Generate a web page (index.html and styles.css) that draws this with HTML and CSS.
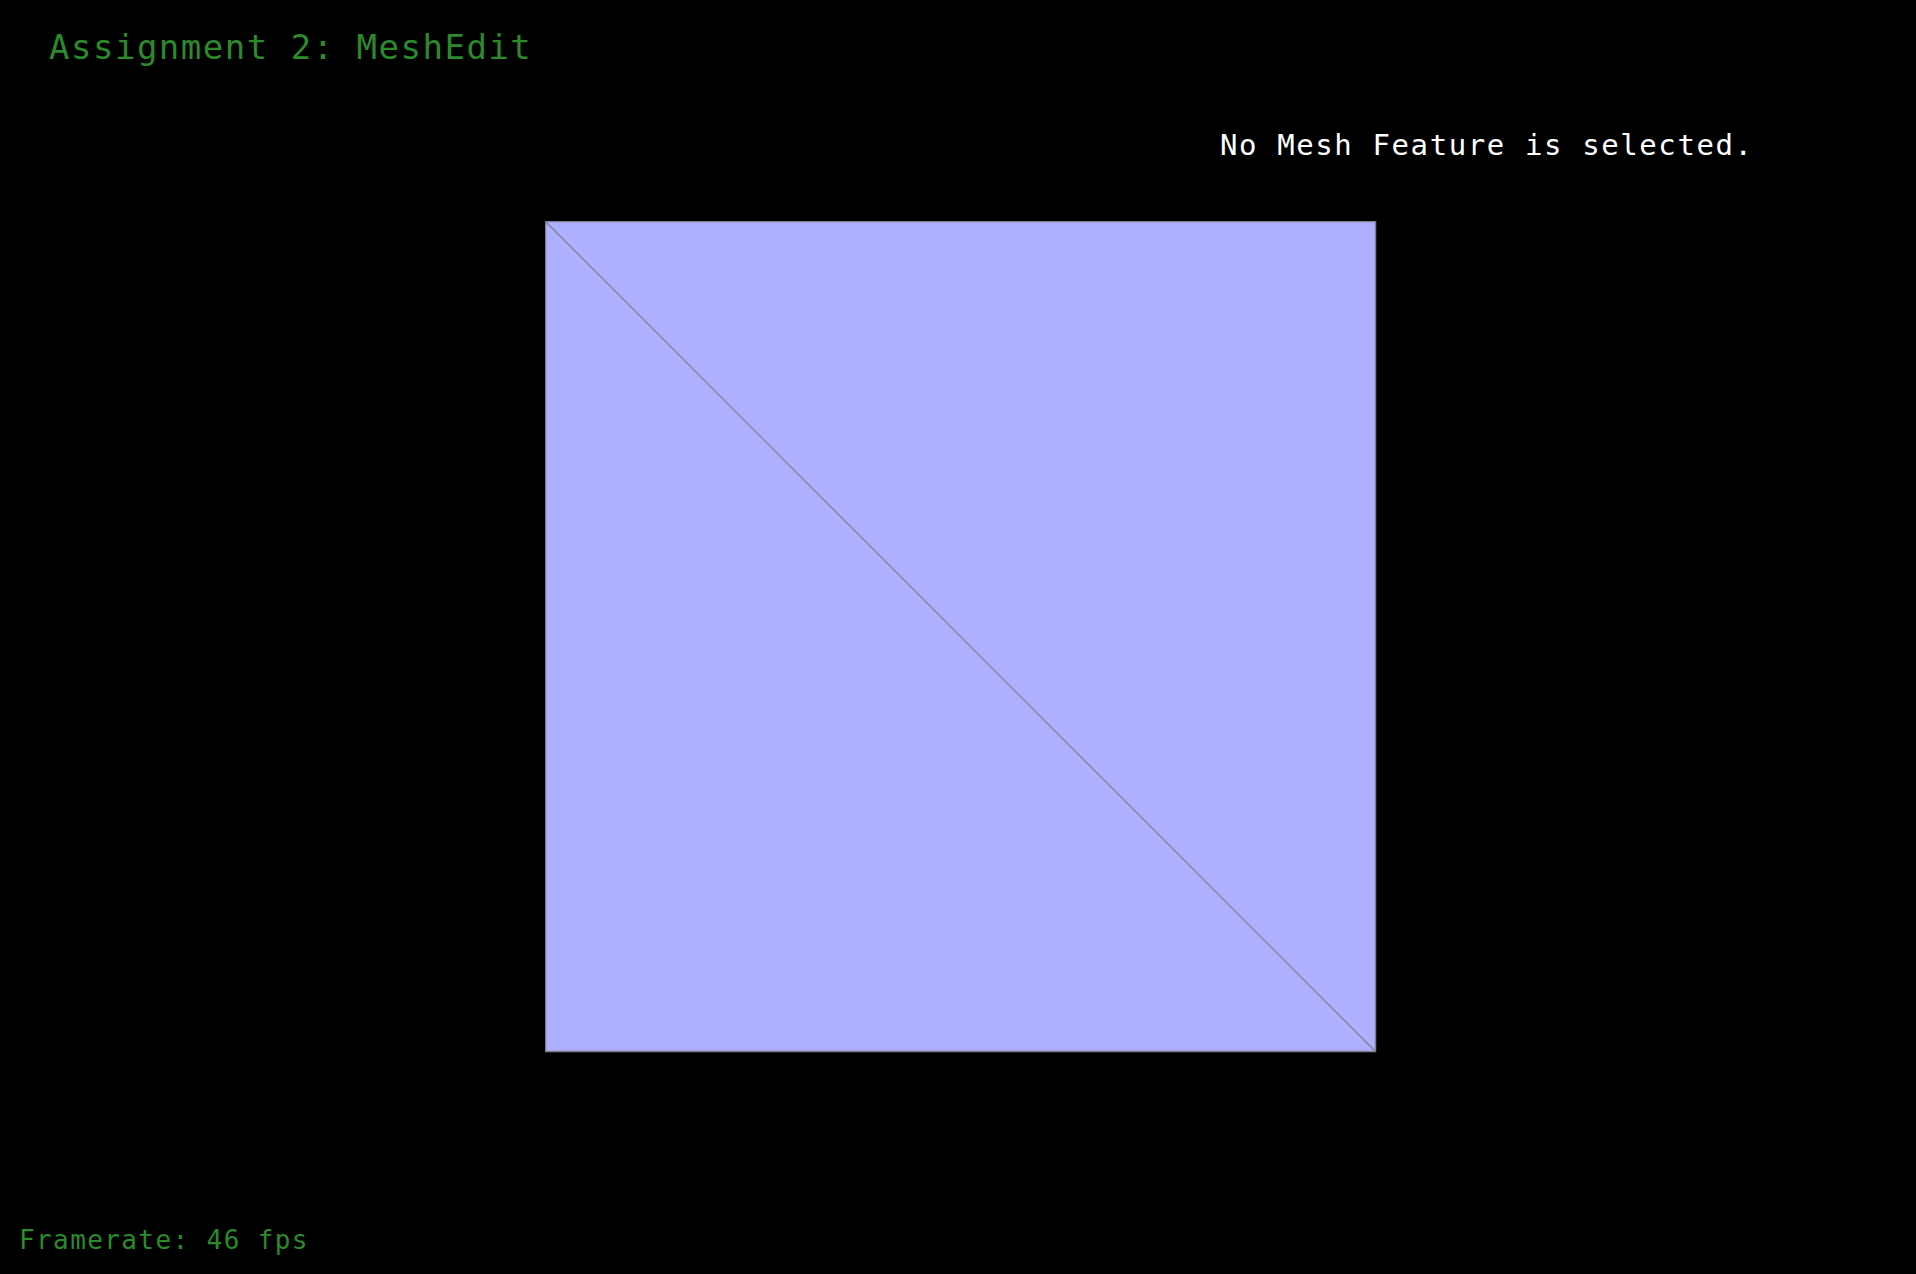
FILE: index.html
```html
<!DOCTYPE html>
<html lang="en">
<head>
<meta charset="utf-8">
<title>Assignment 2: MeshEdit</title>
<link rel="stylesheet" href="styles.css">
</head>
<body>
<main class="viewport">
  <svg class="mesh" width="832" height="832" viewBox="0 0 832 832" aria-label="mesh">
    <rect x="0.5" y="0.5" width="830" height="830" fill="#afafff" stroke="#808090" stroke-width="1.5"/>
    <line x1="0.5" y1="0.5" x2="830.5" y2="830.5" stroke="#7d7d8c" stroke-width="1.2"/>
  </svg>
  <h1 class="hud title">Assignment 2: MeshEdit</h1>
  <p class="hud info">No Mesh Feature is selected.</p>
  <p class="hud fps">Framerate: 46 fps</p>
</main>
</body>
</html>
```
FILE: styles.css
```css
html, body {
  margin: 0;
  padding: 0;
  background: #000;
}
.viewport {
  position: relative;
  width: 100%;
  height: 100vh;
  display: flex;
  align-items: center;
  justify-content: center;
  overflow: hidden;
}
.mesh {
  display: block;
  margin-left: 5px;
  margin-top: 0;
}
.hud {
  position: absolute;
  margin: 0;
  font-family: "DejaVu Sans Mono", "Liberation Mono", monospace;
  font-weight: normal;
  line-height: 1;
  white-space: nowrap;
}
.title {
  left: 49px;
  top: 30px;
  font-size: 34px;
  letter-spacing: 1.5px;
  color: #2b8a2b;
}
.info {
  left: 1220px;
  top: 131px;
  font-size: 29px;
  letter-spacing: 1.6px;
  color: #ffffff;
}
.fps {
  left: 19px;
  top: 1227px;
  font-size: 26px;
  letter-spacing: 1.4px;
  color: #2b8a2b;
}
```
